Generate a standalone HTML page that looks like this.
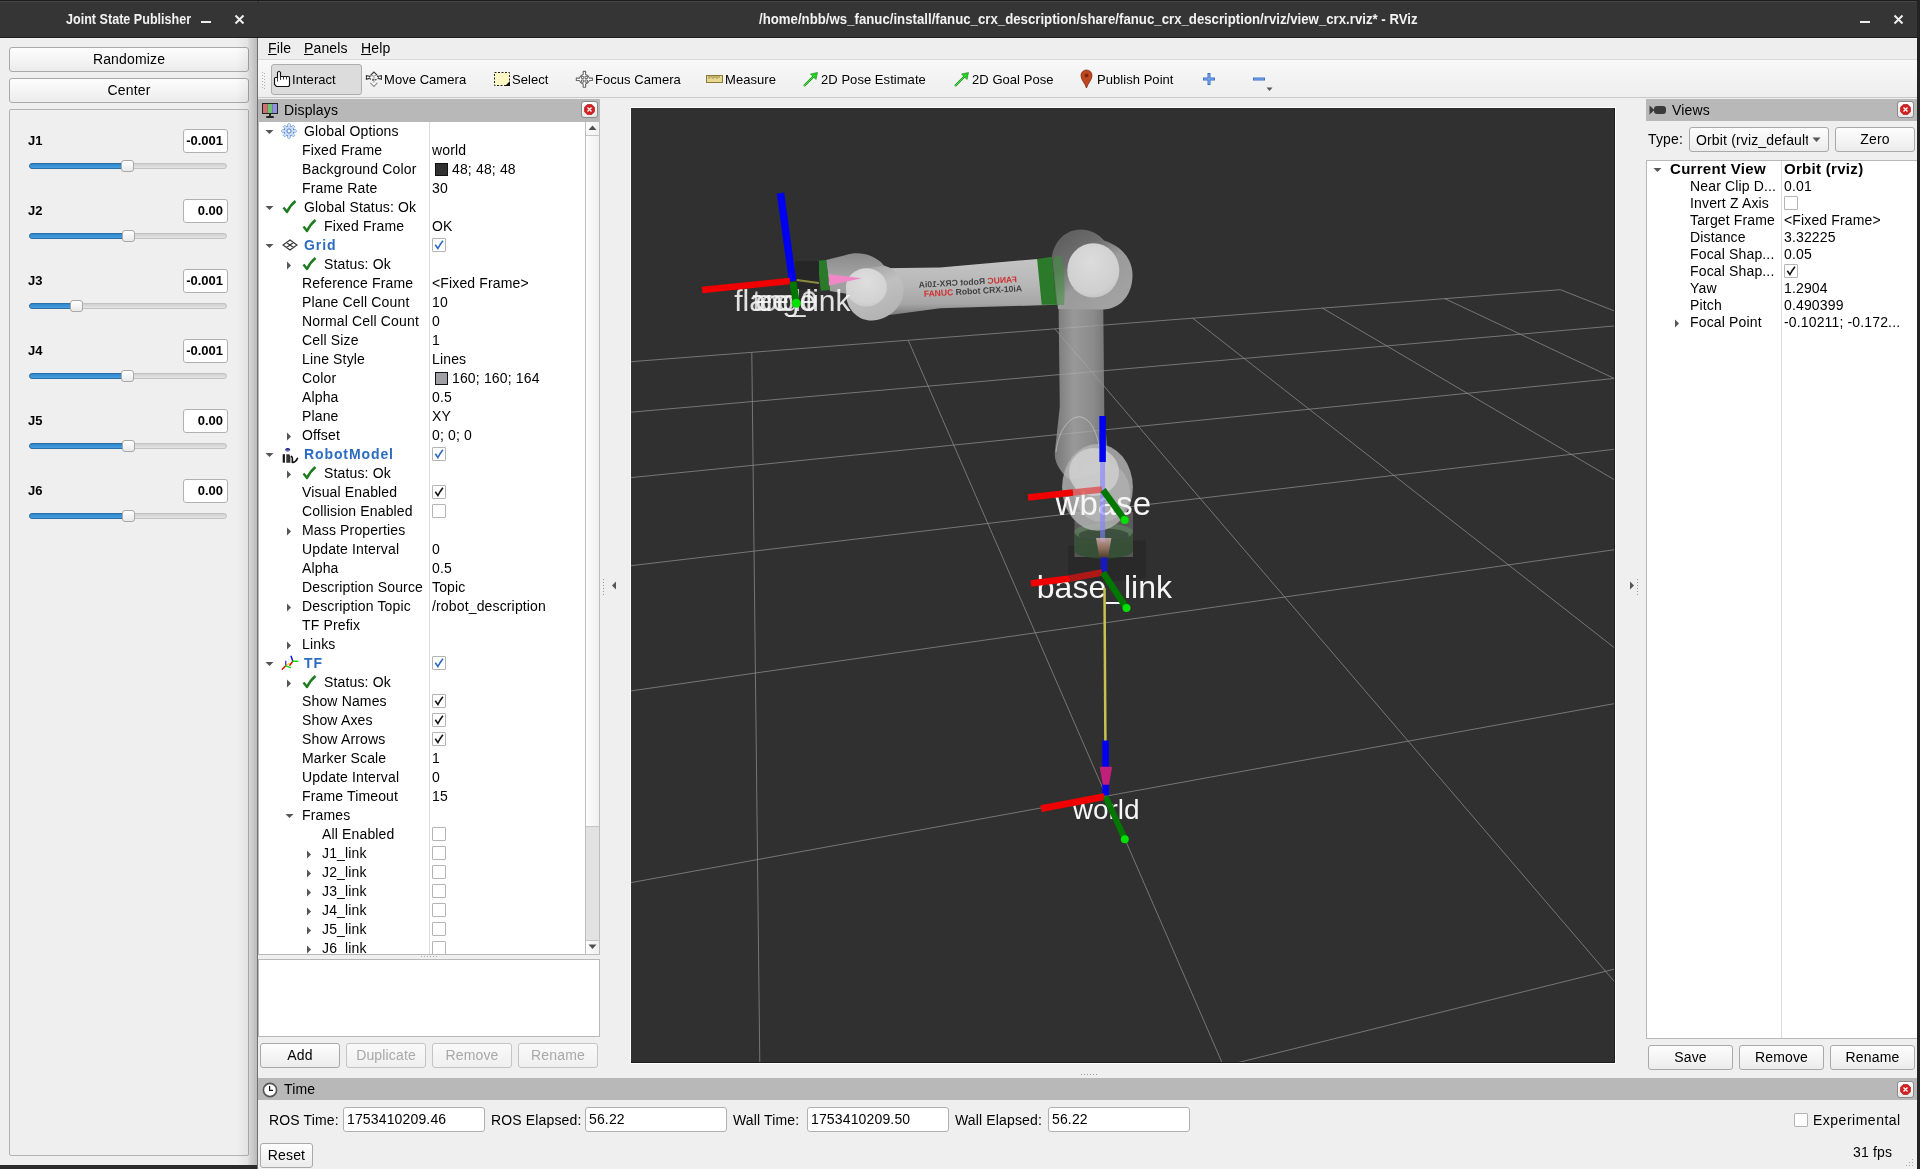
<!DOCTYPE html><html><head><meta charset="utf-8"><title>RViz</title><style>
*{box-sizing:border-box;margin:0;padding:0}
html,body{width:1920px;height:1169px;overflow:hidden;background:#222}
body{position:relative;font-family:"Liberation Sans",sans-serif;color:#000}
div{position:absolute}
.t{font-size:14px;line-height:18px;height:18px;margin-top:-9px;white-space:nowrap;letter-spacing:0.15px}
.ts{font-size:13px;line-height:16px;height:16px;margin-top:-8px;white-space:nowrap}
.btn{border:1px solid #a9a9a9;border-radius:3px;background:linear-gradient(#fdfdfd,#ececec);}
.btnd{border:1px solid #c4c4c4;border-radius:3px;background:linear-gradient(#fafafa,#efefef);}
.bl{font-size:14px;line-height:18px;text-align:center;white-space:nowrap;letter-spacing:0.15px}
.edit{background:#fff;border:1px solid #b1b1b1;border-radius:3px}
.cb{width:14px;height:14px;border:1px solid #b4b4b4;background:#fff;border-radius:1px}
.hdr{background:#b8b8b8}
.close{width:17px;height:17px;border:1px solid #8a8a8a;border-radius:3px;background:linear-gradient(#fff,#e8e8e8)}
</style></head><body>
<div style="left:0;top:0;width:1920px;height:1169px;overflow:hidden;will-change:transform">
<div style="left:0px;top:0px;width:258px;height:38px;background:#353535;border-top:1px solid #1c1c1c;border-bottom:1px solid #1e1e1e"></div>
<div style="left:0px;top:1px;width:257px;height:1px;background:#474747"></div>
<div class="t" style="left:66px;top:19px;color:#f2f2f2;font-weight:bold;font-size:15.5px;letter-spacing:0;transform:scaleX(0.812);transform-origin:0 50%">Joint State Publisher</div>
<div style="left:201px;top:21px;width:10px;height:2px;background:#eee"></div>
<svg style="position:absolute;left:234px;top:14px" width="11" height="11"><path d="M1.5 1.5L9.5 9.5M9.5 1.5L1.5 9.5" stroke="#eee" stroke-width="2"/></svg>
<div style="left:0px;top:38px;width:258px;height:1127px;background:#efefef"></div>
<div style="left:257px;top:38px;width:1px;height:1131px;background:#6f6f6f"></div>
<div style="left:0px;top:1165px;width:257px;height:4px;background:#2b2b2b"></div>
<div class="btn" style="left:9px;top:47px;width:240px;height:25px;"><div class="bl" style="left:0;top:2px;width:238px">Randomize</div></div>
<div class="btn" style="left:9px;top:78px;width:240px;height:25px;"><div class="bl" style="left:0;top:2px;width:238px">Center</div></div>
<div style="left:9px;top:109px;width:240px;height:1047px;border:1px solid #b3b3b3;border-radius:2px"></div>
<div class="t" style="left:28px;top:141px;font-weight:bold;font-size:13px;letter-spacing:0">J1</div>
<div class="edit" style="left:183px;top:129px;width:45px;height:24px;"><div class="t" style="right:4px;top:11px;font-weight:bold;font-size:13px;letter-spacing:0">-0.001</div></div>
<div style="left:29px;top:163px;width:198px;height:6px;background:linear-gradient(#d0d0d0,#e4e4e4);border:1px solid #c2c2c2;border-radius:3px"></div>
<div style="left:29px;top:163px;width:98px;height:6px;background:linear-gradient(#2f85c8,#48a0e0);border:1px solid #2a6fa8;border-radius:3px"></div>
<div style="left:121px;top:160px;width:13px;height:12px;background:linear-gradient(#ffffff,#e9e9e9);border:1px solid #a8a8a8;border-radius:3px"></div>
<div class="t" style="left:28px;top:211px;font-weight:bold;font-size:13px;letter-spacing:0">J2</div>
<div class="edit" style="left:183px;top:199px;width:45px;height:24px;"><div class="t" style="right:4px;top:11px;font-weight:bold;font-size:13px;letter-spacing:0">0.00</div></div>
<div style="left:29px;top:233px;width:198px;height:6px;background:linear-gradient(#d0d0d0,#e4e4e4);border:1px solid #c2c2c2;border-radius:3px"></div>
<div style="left:29px;top:233px;width:99px;height:6px;background:linear-gradient(#2f85c8,#48a0e0);border:1px solid #2a6fa8;border-radius:3px"></div>
<div style="left:122px;top:230px;width:13px;height:12px;background:linear-gradient(#ffffff,#e9e9e9);border:1px solid #a8a8a8;border-radius:3px"></div>
<div class="t" style="left:28px;top:281px;font-weight:bold;font-size:13px;letter-spacing:0">J3</div>
<div class="edit" style="left:183px;top:269px;width:45px;height:24px;"><div class="t" style="right:4px;top:11px;font-weight:bold;font-size:13px;letter-spacing:0">-0.001</div></div>
<div style="left:29px;top:303px;width:198px;height:6px;background:linear-gradient(#d0d0d0,#e4e4e4);border:1px solid #c2c2c2;border-radius:3px"></div>
<div style="left:29px;top:303px;width:47px;height:6px;background:linear-gradient(#2f85c8,#48a0e0);border:1px solid #2a6fa8;border-radius:3px"></div>
<div style="left:70px;top:300px;width:13px;height:12px;background:linear-gradient(#ffffff,#e9e9e9);border:1px solid #a8a8a8;border-radius:3px"></div>
<div class="t" style="left:28px;top:351px;font-weight:bold;font-size:13px;letter-spacing:0">J4</div>
<div class="edit" style="left:183px;top:339px;width:45px;height:24px;"><div class="t" style="right:4px;top:11px;font-weight:bold;font-size:13px;letter-spacing:0">-0.001</div></div>
<div style="left:29px;top:373px;width:198px;height:6px;background:linear-gradient(#d0d0d0,#e4e4e4);border:1px solid #c2c2c2;border-radius:3px"></div>
<div style="left:29px;top:373px;width:98px;height:6px;background:linear-gradient(#2f85c8,#48a0e0);border:1px solid #2a6fa8;border-radius:3px"></div>
<div style="left:121px;top:370px;width:13px;height:12px;background:linear-gradient(#ffffff,#e9e9e9);border:1px solid #a8a8a8;border-radius:3px"></div>
<div class="t" style="left:28px;top:421px;font-weight:bold;font-size:13px;letter-spacing:0">J5</div>
<div class="edit" style="left:183px;top:409px;width:45px;height:24px;"><div class="t" style="right:4px;top:11px;font-weight:bold;font-size:13px;letter-spacing:0">0.00</div></div>
<div style="left:29px;top:443px;width:198px;height:6px;background:linear-gradient(#d0d0d0,#e4e4e4);border:1px solid #c2c2c2;border-radius:3px"></div>
<div style="left:29px;top:443px;width:99px;height:6px;background:linear-gradient(#2f85c8,#48a0e0);border:1px solid #2a6fa8;border-radius:3px"></div>
<div style="left:122px;top:440px;width:13px;height:12px;background:linear-gradient(#ffffff,#e9e9e9);border:1px solid #a8a8a8;border-radius:3px"></div>
<div class="t" style="left:28px;top:491px;font-weight:bold;font-size:13px;letter-spacing:0">J6</div>
<div class="edit" style="left:183px;top:479px;width:45px;height:24px;"><div class="t" style="right:4px;top:11px;font-weight:bold;font-size:13px;letter-spacing:0">0.00</div></div>
<div style="left:29px;top:513px;width:198px;height:6px;background:linear-gradient(#d0d0d0,#e4e4e4);border:1px solid #c2c2c2;border-radius:3px"></div>
<div style="left:29px;top:513px;width:99px;height:6px;background:linear-gradient(#2f85c8,#48a0e0);border:1px solid #2a6fa8;border-radius:3px"></div>
<div style="left:122px;top:510px;width:13px;height:12px;background:linear-gradient(#ffffff,#e9e9e9);border:1px solid #a8a8a8;border-radius:3px"></div>
<div style="left:236px;top:38px;width:21px;height:1127px;background:linear-gradient(90deg,rgba(0,0,0,0),rgba(0,0,0,0.05) 55%,rgba(0,0,0,0.1) 62%,rgba(0,0,0,0.22))"></div>
<div style="left:258px;top:0px;width:1659px;height:38px;background:#353535;border-top:1px solid #1c1c1c;border-bottom:1px solid #1e1e1e"></div>
<div style="left:259px;top:1px;width:1657px;height:1px;background:#474747"></div>
<div style="left:1917px;top:0px;width:3px;height:1169px;background:#232323"></div>
<div class="t" style="left:759px;top:19px;color:#f2f2f2;font-weight:bold;font-size:15.5px;letter-spacing:0;transform:scaleX(0.853);transform-origin:0 50%">/home/nbb/ws_fanuc/install/fanuc_crx_description/share/fanuc_crx_description/rviz/view_crx.rviz* - RViz</div>
<div style="left:1860px;top:21px;width:10px;height:2px;background:#eee"></div>
<svg style="position:absolute;left:1893px;top:14px" width="11" height="11"><path d="M1.5 1.5L9.5 9.5M9.5 1.5L1.5 9.5" stroke="#eee" stroke-width="2"/></svg>
<div style="left:258px;top:38px;width:1659px;height:1131px;background:#efefef"></div>
<div style="left:258px;top:38px;width:1659px;height:22px;background:#eeeeee;border-bottom:1px solid #dadada"></div>
<div class="t" style="left:268px;top:48px;font-size:14px"><u>F</u>ile</div>
<div class="t" style="left:304px;top:48px;font-size:14px"><u>P</u>anels</div>
<div class="t" style="left:361px;top:48px;font-size:14px"><u>H</u>elp</div>
<div style="left:258px;top:60px;width:1659px;height:38px;background:linear-gradient(#f8f8f8,#eeeeee);border-bottom:1px solid #c9c9c9"></div>
<div style="left:262px;top:72px;width:1px;height:1px;background:#b0b0b0"></div>
<div style="left:264px;top:73px;width:1px;height:1px;background:#b0b0b0"></div>
<div style="left:262px;top:75px;width:1px;height:1px;background:#b0b0b0"></div>
<div style="left:264px;top:76px;width:1px;height:1px;background:#b0b0b0"></div>
<div style="left:262px;top:78px;width:1px;height:1px;background:#b0b0b0"></div>
<div style="left:264px;top:79px;width:1px;height:1px;background:#b0b0b0"></div>
<div style="left:262px;top:81px;width:1px;height:1px;background:#b0b0b0"></div>
<div style="left:264px;top:82px;width:1px;height:1px;background:#b0b0b0"></div>
<div style="left:262px;top:84px;width:1px;height:1px;background:#b0b0b0"></div>
<div style="left:264px;top:85px;width:1px;height:1px;background:#b0b0b0"></div>
<div style="left:262px;top:87px;width:1px;height:1px;background:#b0b0b0"></div>
<div style="left:264px;top:88px;width:1px;height:1px;background:#b0b0b0"></div>
<div style="left:271px;top:64px;width:91px;height:31px;background:#dcdcdc;border:1px solid #adadad;border-radius:3px"></div>
<div class="t" style="left:292px;top:80px;font-size:13px;letter-spacing:0.05px">Interact</div>
<div class="t" style="left:384px;top:80px;font-size:13px;letter-spacing:0.05px">Move Camera</div>
<div class="t" style="left:512px;top:80px;font-size:13px;letter-spacing:0.05px">Select</div>
<div class="t" style="left:595px;top:80px;font-size:13px;letter-spacing:0.05px">Focus Camera</div>
<div class="t" style="left:725px;top:80px;font-size:13px;letter-spacing:0.05px">Measure</div>
<div class="t" style="left:821px;top:80px;font-size:13px;letter-spacing:0.05px">2D Pose Estimate</div>
<div class="t" style="left:972px;top:80px;font-size:13px;letter-spacing:0.05px">2D Goal Pose</div>
<div class="t" style="left:1097px;top:80px;font-size:13px;letter-spacing:0.05px">Publish Point</div>
<svg style="position:absolute;left:268px;top:62px" width="32" height="34" viewBox="0 0 32 34">
<path d="M9.5 15.5V10.5Q11 8 12.5 10.5V14.5H20.5Q21.5 14.5 21.5 15.5V23.5L20.5 24.5H8.5L6.5 22.5V16.5Q6.5 15.5 7.5 15.5Z" fill="#fff" stroke="#111" stroke-width="1.15"/>
<path d="M9.5 15.5V19.5M12.5 14.5V18M15.5 14.5V17.5M18.5 14.5V17.5" stroke="#222" stroke-width="0.9"/></svg>
<svg style="position:absolute;left:362px;top:66px" width="24" height="26" viewBox="0 0 24 26">
<path d="M8.4 16.9L11.9 20.4L15.4 16.9" fill="#fff" stroke="#8a8a8a" stroke-width="1.1"/>
<rect x="11.1" y="9.4" width="1.6" height="7.5" fill="#bdbdbd"/>
<path d="M7.6 10.2L4.4 9.6V13.3L7.4 12.4M16.2 10.2L19.4 9.6V13.3L16.4 12.4" fill="#fff" stroke="#333" stroke-width="1.1"/>
<ellipse cx="11.9" cy="11.6" rx="4.6" ry="2.3" fill="none" stroke="#222" stroke-width="1.1" stroke-dasharray="1.6 1.2"/>
<path d="M8.5 9.4L11.9 6.1L15.3 9.4" fill="#fff" stroke="#333" stroke-width="1.1"/>
</svg>
<svg style="position:absolute;left:493px;top:71px" width="18" height="16" viewBox="0 0 18 16">
<rect x="1.5" y="1.5" width="15" height="13" fill="#fbf6c4" stroke="#222" stroke-width="1" stroke-dasharray="2,1.5"/>
<path d="M17 10v5h-5z" fill="#111"/></svg>
<svg style="position:absolute;left:572px;top:66px" width="24" height="26" viewBox="0 0 24 26">
<path d="M11.2 5.4h2.4v3.2l2.3 1.2 1.6 2.3h3v2.4h-3l-1.6 2.3-2.3 1.2v3.2h-2.4v-3.2l-2.3-1.2-1.6-2.3h-3v-2.4h3l1.6-2.3 2.3-1.2z" fill="#fff" stroke="#6a6a6a" stroke-width="1.1" stroke-linejoin="round"/>
<path d="M9.4 10.4h2.3v2.2h-2.3zM13.1 10.4h2.3v2.2h-2.3zM9.4 14h2.3v2.2h-2.3zM13.1 14h2.3v2.2h-2.3z" fill="none" stroke="#6a6a6a" stroke-width="1"/>
</svg>
<svg style="position:absolute;left:706px;top:75px" width="17" height="8" viewBox="0 0 17 8">
<rect x="0.5" y="0.5" width="16" height="7" fill="#e6d890" stroke="#8a7a3a" stroke-width="1"/>
<path d="M3 1v3M5 1v2M7 1v3M9 1v2M11 1v3M13 1v2" stroke="#8a7a3a" stroke-width="0.8"/></svg>
<svg style="position:absolute;left:802px;top:71px" width="17" height="17" viewBox="0 0 17 17">
<path d="M2 15L14 3" stroke="#1a8a1a" stroke-width="2.2"/><path d="M15.5 1.5l-1.5 7-5.5-5.5z" fill="#22cc22" stroke="#1a8a1a" stroke-width="0.6"/>
<path d="M2 15L13 4" stroke="#33ee33" stroke-width="1"/></svg>
<svg style="position:absolute;left:953px;top:71px" width="17" height="17" viewBox="0 0 17 17">
<path d="M2 15L14 3" stroke="#1a8a1a" stroke-width="2.2"/><path d="M15.5 1.5l-1.5 7-5.5-5.5z" fill="#22cc22" stroke="#1a8a1a" stroke-width="0.6"/>
<path d="M2 15L13 4" stroke="#33ee33" stroke-width="1"/></svg>
<svg style="position:absolute;left:1080px;top:69px" width="13" height="20" viewBox="0 0 13 20">
<path d="M6.5 19C5 14 1 11 1 6.5a5.5 5.5 0 0 1 11 0C12 11 8 14 6.5 19z" fill="#c0461e" stroke="#7a2a10" stroke-width="0.8"/>
<circle cx="6.5" cy="6.5" r="2" fill="#7a2a10"/></svg>
<svg style="position:absolute;left:1202px;top:72px" width="14" height="14" viewBox="0 0 14 14">
<path d="M7 1v12M1 7h12" stroke="#3a70c8" stroke-width="3"/><path d="M7 2v10M2 7h10" stroke="#8ab4f0" stroke-width="1"/></svg>
<svg style="position:absolute;left:1252px;top:75px" width="14" height="8" viewBox="0 0 14 8">
<path d="M1 4h12" stroke="#3a70c8" stroke-width="3"/><path d="M2 4h10" stroke="#8ab4f0" stroke-width="1"/></svg>
<svg style="position:absolute;left:1266px;top:87px" width="8" height="5"><path d="M0.5 0.5h6l-3 3.5z" fill="#555"/></svg>
<div class="hdr" style="left:258px;top:99px;width:342px;height:23px;"></div>
<svg style="position:absolute;left:261px;top:102px" width="18" height="17" viewBox="0 0 18 17">
<rect x="1" y="1" width="16" height="11" fill="#222"/><rect x="2" y="2" width="4.7" height="9" fill="#d07070"/><rect x="6.7" y="2" width="4.6" height="9" fill="#70c070"/><rect x="11.3" y="2" width="4.7" height="9" fill="#9090e0"/>
<rect x="8" y="12" width="2" height="2" fill="#222"/><rect x="5" y="14" width="8" height="2" rx="1" fill="#222"/></svg>
<div class="t" style="left:284px;top:110px;font-size:14px">Displays</div>
<div class="close" style="left:581px;top:101px;width:17px;height:17px;"></div><svg style="position:absolute;left:584px;top:104px" width="11" height="11" viewBox="0 0 11 11"><path d="M3.3 0.5h4.4l2.8 2.8v4.4l-2.8 2.8h-4.4l-2.8-2.8v-4.4z" fill="#d42020" stroke="#a01010" stroke-width="0.6"/><path d="M3.5 3.5l4 4M7.5 3.5l-4 4" stroke="#fff" stroke-width="1.3"/></svg>
<div style="left:258px;top:122px;width:342px;height:833px;background:#fff;border-left:1px solid #b8b8b8;border-bottom:1px solid #b8b8b8"></div>
<div style="left:429px;top:122px;width:1px;height:832px;background:#dcdcdc"></div>
<div style="left:585px;top:122px;width:15px;height:833px;background:#e2e2e2;border-left:1px solid #bdbdbd;border-right:1px solid #bdbdbd;border-bottom:1px solid #bdbdbd"></div>
<div style="left:586px;top:135px;width:13px;height:692px;background:linear-gradient(90deg,#fdfdfd,#f0f0f0);border-top:1px solid #c4c4c4;border-bottom:1px solid #c4c4c4"></div>
<div style="left:586px;top:122px;width:13px;height:13px;background:linear-gradient(90deg,#fdfdfd,#f0f0f0)"></div>
<div style="left:586px;top:940px;width:13px;height:14px;background:linear-gradient(90deg,#fdfdfd,#f0f0f0);border-top:1px solid #c4c4c4"></div>
<svg style="position:absolute;left:588px;top:125px" width="9" height="6"><path d="M0.5 5h8l-4-4.5z" fill="#505050"/></svg>
<svg style="position:absolute;left:588px;top:944px" width="9" height="6"><path d="M0.5 0.5h8l-4 4.5z" fill="#505050"/></svg>
<div style="left:259px;top:121px;width:326px;height:833px;overflow:hidden">
<div style="left:-259px;top:-121px;width:1px;height:1px"><svg style="position:absolute;left:265px;top:129px" width="9" height="6"><path d="M0.5 1h8l-4 4z" fill="#555"/></svg><svg style="position:absolute;left:281px;top:123px" width="16" height="16" viewBox="0 0 16 16"><g fill="#cfdef5" stroke="#3f7bd0" stroke-width="0.9"><rect x="6.9" y="0.9" width="2.2" height="3" rx="0.5" transform="rotate(0 8 8)"/><rect x="6.9" y="0.9" width="2.2" height="3" rx="0.5" transform="rotate(45 8 8)"/><rect x="6.9" y="0.9" width="2.2" height="3" rx="0.5" transform="rotate(90 8 8)"/><rect x="6.9" y="0.9" width="2.2" height="3" rx="0.5" transform="rotate(135 8 8)"/><rect x="6.9" y="0.9" width="2.2" height="3" rx="0.5" transform="rotate(180 8 8)"/><rect x="6.9" y="0.9" width="2.2" height="3" rx="0.5" transform="rotate(225 8 8)"/><rect x="6.9" y="0.9" width="2.2" height="3" rx="0.5" transform="rotate(270 8 8)"/><rect x="6.9" y="0.9" width="2.2" height="3" rx="0.5" transform="rotate(315 8 8)"/></g>
<circle cx="8" cy="8" r="4.9" fill="#cfdef5" stroke="#3f7bd0" stroke-width="1"/><g fill="#cfdef5"><rect x="6.9" y="0.9" width="2.2" height="3" rx="0.3" transform="rotate(0 8 8)"/><rect x="6.9" y="0.9" width="2.2" height="3" rx="0.3" transform="rotate(45 8 8)"/><rect x="6.9" y="0.9" width="2.2" height="3" rx="0.3" transform="rotate(90 8 8)"/><rect x="6.9" y="0.9" width="2.2" height="3" rx="0.3" transform="rotate(135 8 8)"/><rect x="6.9" y="0.9" width="2.2" height="3" rx="0.3" transform="rotate(180 8 8)"/><rect x="6.9" y="0.9" width="2.2" height="3" rx="0.3" transform="rotate(225 8 8)"/><rect x="6.9" y="0.9" width="2.2" height="3" rx="0.3" transform="rotate(270 8 8)"/><rect x="6.9" y="0.9" width="2.2" height="3" rx="0.3" transform="rotate(315 8 8)"/></g><circle cx="8" cy="8" r="4.4" fill="#cfdef5"/><circle cx="8" cy="8" r="2.1" fill="#fff" stroke="#3f7bd0" stroke-width="1"/></svg><div class="t" style="left:304px;top:131px;">Global Options</div><div class="t" style="left:302px;top:150px;">Fixed Frame</div><div class="t" style="left:432px;top:150px;">world</div><div class="t" style="left:302px;top:169px;">Background Color</div><div style="left:435px;top:163px;width:13px;height:13px;background:#303030;border:1px solid #111"></div><div class="t" style="left:452px;top:169px;">48; 48; 48</div><div class="t" style="left:302px;top:188px;">Frame Rate</div><div class="t" style="left:432px;top:188px;">30</div><svg style="position:absolute;left:265px;top:205px" width="9" height="6"><path d="M0.5 1h8l-4 4z" fill="#555"/></svg><svg style="position:absolute;left:282px;top:200px" width="15" height="14" viewBox="0 0 15 14"><path d="M1.5 7.5l3.5 4.5c2-4.5 5-8 8.5-11" fill="none" stroke="#1e7a1e" stroke-width="2.4" stroke-linejoin="round"/></svg><div class="t" style="left:304px;top:207px;">Global Status: Ok</div><svg style="position:absolute;left:302px;top:219px" width="15" height="14" viewBox="0 0 15 14"><path d="M1.5 7.5l3.5 4.5c2-4.5 5-8 8.5-11" fill="none" stroke="#1e7a1e" stroke-width="2.4" stroke-linejoin="round"/></svg><div class="t" style="left:324px;top:226px;">Fixed Frame</div><div class="t" style="left:432px;top:226px;">OK</div><svg style="position:absolute;left:265px;top:243px" width="9" height="6"><path d="M0.5 1h8l-4 4z" fill="#555"/></svg><svg style="position:absolute;left:282px;top:239px" width="16" height="12" viewBox="0 0 16 12"><path d="M8 1L15 6L8 11L1 6z M4.5 3.5L11.5 8.5 M11.5 3.5L4.5 8.5" fill="none" stroke="#333" stroke-width="1.1"/></svg><div class="t" style="left:304px;top:245px;color:#2c6cc0;font-weight:bold;letter-spacing:0.9px">Grid</div><div class="cb" style="left:432px;top:238px;width:14px;height:14px;"></div><svg style="position:absolute;left:434px;top:240px" width="10" height="10" viewBox="0 0 10 10"><path d="M1.3 4.8l2.6 3.7c1.5-3 3.3-5.5 5-7.7" fill="none" stroke="#2a68c0" stroke-width="1.6"/></svg><svg style="position:absolute;left:286px;top:261px" width="6" height="9"><path d="M1 0.5v8l4-4z" fill="#555"/></svg><svg style="position:absolute;left:302px;top:257px" width="15" height="14" viewBox="0 0 15 14"><path d="M1.5 7.5l3.5 4.5c2-4.5 5-8 8.5-11" fill="none" stroke="#1e7a1e" stroke-width="2.4" stroke-linejoin="round"/></svg><div class="t" style="left:324px;top:264px;">Status: Ok</div><div class="t" style="left:302px;top:283px;">Reference Frame</div><div class="t" style="left:432px;top:283px;">&lt;Fixed Frame&gt;</div><div class="t" style="left:302px;top:302px;">Plane Cell Count</div><div class="t" style="left:432px;top:302px;">10</div><div class="t" style="left:302px;top:321px;">Normal Cell Count</div><div class="t" style="left:432px;top:321px;">0</div><div class="t" style="left:302px;top:340px;">Cell Size</div><div class="t" style="left:432px;top:340px;">1</div><div class="t" style="left:302px;top:359px;">Line Style</div><div class="t" style="left:432px;top:359px;">Lines</div><div class="t" style="left:302px;top:378px;">Color</div><div style="left:435px;top:372px;width:13px;height:13px;background:#a0a0a4;border:1px solid #111"></div><div class="t" style="left:452px;top:378px;">160; 160; 164</div><div class="t" style="left:302px;top:397px;">Alpha</div><div class="t" style="left:432px;top:397px;">0.5</div><div class="t" style="left:302px;top:416px;">Plane</div><div class="t" style="left:432px;top:416px;">XY</div><svg style="position:absolute;left:286px;top:432px" width="6" height="9"><path d="M1 0.5v8l4-4z" fill="#555"/></svg><div class="t" style="left:302px;top:435px;">Offset</div><div class="t" style="left:432px;top:435px;">0; 0; 0</div><svg style="position:absolute;left:265px;top:452px" width="9" height="6"><path d="M0.5 1h8l-4 4z" fill="#555"/></svg><svg style="position:absolute;left:278px;top:443px" width="24" height="24" viewBox="0 0 24 24">
<ellipse cx="9.7" cy="6.8" rx="2.5" ry="1.7" fill="#1010a0"/><path d="M7.4 7.2h4.6" stroke="#d8d0a0" stroke-width="0.7"/>
<rect x="4.7" y="11.2" width="2.2" height="8.5" fill="#111"/><path d="M8.2 11.2h3.2l1 2.5v6h-4.2z" fill="#333"/><path d="M8.6 12v7.5" stroke="#777" stroke-width="0.8"/>
<path d="M13.4 13.4c1.6 1 1 4 0.9 5.8c1.5 0.5 3.5-0.5 5.2-3.8" fill="none" stroke="#111" stroke-width="1.6" stroke-linecap="round"/></svg><div class="t" style="left:304px;top:454px;color:#2c6cc0;font-weight:bold;letter-spacing:0.9px">RobotModel</div><div class="cb" style="left:432px;top:447px;width:14px;height:14px;"></div><svg style="position:absolute;left:434px;top:449px" width="10" height="10" viewBox="0 0 10 10"><path d="M1.3 4.8l2.6 3.7c1.5-3 3.3-5.5 5-7.7" fill="none" stroke="#2a68c0" stroke-width="1.6"/></svg><svg style="position:absolute;left:286px;top:470px" width="6" height="9"><path d="M1 0.5v8l4-4z" fill="#555"/></svg><svg style="position:absolute;left:302px;top:466px" width="15" height="14" viewBox="0 0 15 14"><path d="M1.5 7.5l3.5 4.5c2-4.5 5-8 8.5-11" fill="none" stroke="#1e7a1e" stroke-width="2.4" stroke-linejoin="round"/></svg><div class="t" style="left:324px;top:473px;">Status: Ok</div><div class="t" style="left:302px;top:492px;">Visual Enabled</div><div class="cb" style="left:432px;top:485px;width:14px;height:14px;"></div><svg style="position:absolute;left:434px;top:487px" width="10" height="10" viewBox="0 0 10 10"><path d="M1.3 4.8l2.6 3.7c1.5-3 3.3-5.5 5-7.7" fill="none" stroke="#111" stroke-width="1.6"/></svg><div class="t" style="left:302px;top:511px;">Collision Enabled</div><div class="cb" style="left:432px;top:504px;width:14px;height:14px;"></div><svg style="position:absolute;left:286px;top:527px" width="6" height="9"><path d="M1 0.5v8l4-4z" fill="#555"/></svg><div class="t" style="left:302px;top:530px;">Mass Properties</div><div class="t" style="left:302px;top:549px;">Update Interval</div><div class="t" style="left:432px;top:549px;">0</div><div class="t" style="left:302px;top:568px;">Alpha</div><div class="t" style="left:432px;top:568px;">0.5</div><div class="t" style="left:302px;top:587px;">Description Source</div><div class="t" style="left:432px;top:587px;">Topic</div><svg style="position:absolute;left:286px;top:603px" width="6" height="9"><path d="M1 0.5v8l4-4z" fill="#555"/></svg><div class="t" style="left:302px;top:606px;">Description Topic</div><div class="t" style="left:432px;top:606px;">/robot_description</div><div class="t" style="left:302px;top:625px;">TF Prefix</div><svg style="position:absolute;left:286px;top:641px" width="6" height="9"><path d="M1 0.5v8l4-4z" fill="#555"/></svg><div class="t" style="left:302px;top:644px;">Links</div><svg style="position:absolute;left:265px;top:661px" width="9" height="6"><path d="M0.5 1h8l-4 4z" fill="#555"/></svg><svg style="position:absolute;left:278px;top:651px" width="24" height="24" viewBox="0 0 24 24" stroke-linecap="round">
<path d="M7.7 14.8L11 12.3" stroke="#f0e000" stroke-width="1.3"/>
<path d="M7.7 14.8V10.3" stroke="#4040ff" stroke-width="1.4"/><path d="M7.7 14.8L4.3 18.3" stroke="#f00000" stroke-width="1.4"/><path d="M7.7 14.8L12.5 16.6" stroke="#00e000" stroke-width="1.4"/>
<path d="M14.8 10.3L13.1 5.3" stroke="#0000f0" stroke-width="1.4"/><path d="M14.8 10.3L11.8 14.2" stroke="#f00000" stroke-width="1.4"/><path d="M14.8 10.3H19.7" stroke="#00e000" stroke-width="1.4"/></svg><div class="t" style="left:304px;top:663px;color:#2c6cc0;font-weight:bold;letter-spacing:0.9px">TF</div><div class="cb" style="left:432px;top:656px;width:14px;height:14px;"></div><svg style="position:absolute;left:434px;top:658px" width="10" height="10" viewBox="0 0 10 10"><path d="M1.3 4.8l2.6 3.7c1.5-3 3.3-5.5 5-7.7" fill="none" stroke="#2a68c0" stroke-width="1.6"/></svg><svg style="position:absolute;left:286px;top:679px" width="6" height="9"><path d="M1 0.5v8l4-4z" fill="#555"/></svg><svg style="position:absolute;left:302px;top:675px" width="15" height="14" viewBox="0 0 15 14"><path d="M1.5 7.5l3.5 4.5c2-4.5 5-8 8.5-11" fill="none" stroke="#1e7a1e" stroke-width="2.4" stroke-linejoin="round"/></svg><div class="t" style="left:324px;top:682px;">Status: Ok</div><div class="t" style="left:302px;top:701px;">Show Names</div><div class="cb" style="left:432px;top:694px;width:14px;height:14px;"></div><svg style="position:absolute;left:434px;top:696px" width="10" height="10" viewBox="0 0 10 10"><path d="M1.3 4.8l2.6 3.7c1.5-3 3.3-5.5 5-7.7" fill="none" stroke="#111" stroke-width="1.6"/></svg><div class="t" style="left:302px;top:720px;">Show Axes</div><div class="cb" style="left:432px;top:713px;width:14px;height:14px;"></div><svg style="position:absolute;left:434px;top:715px" width="10" height="10" viewBox="0 0 10 10"><path d="M1.3 4.8l2.6 3.7c1.5-3 3.3-5.5 5-7.7" fill="none" stroke="#111" stroke-width="1.6"/></svg><div class="t" style="left:302px;top:739px;">Show Arrows</div><div class="cb" style="left:432px;top:732px;width:14px;height:14px;"></div><svg style="position:absolute;left:434px;top:734px" width="10" height="10" viewBox="0 0 10 10"><path d="M1.3 4.8l2.6 3.7c1.5-3 3.3-5.5 5-7.7" fill="none" stroke="#111" stroke-width="1.6"/></svg><div class="t" style="left:302px;top:758px;">Marker Scale</div><div class="t" style="left:432px;top:758px;">1</div><div class="t" style="left:302px;top:777px;">Update Interval</div><div class="t" style="left:432px;top:777px;">0</div><div class="t" style="left:302px;top:796px;">Frame Timeout</div><div class="t" style="left:432px;top:796px;">15</div><svg style="position:absolute;left:285px;top:813px" width="9" height="6"><path d="M0.5 1h8l-4 4z" fill="#555"/></svg><div class="t" style="left:302px;top:815px;">Frames</div><div class="t" style="left:322px;top:834px;">All Enabled</div><div class="cb" style="left:432px;top:827px;width:14px;height:14px;"></div><svg style="position:absolute;left:306px;top:850px" width="6" height="9"><path d="M1 0.5v8l4-4z" fill="#555"/></svg><div class="t" style="left:322px;top:853px;">J1_link</div><div class="cb" style="left:432px;top:846px;width:14px;height:14px;"></div><svg style="position:absolute;left:306px;top:869px" width="6" height="9"><path d="M1 0.5v8l4-4z" fill="#555"/></svg><div class="t" style="left:322px;top:872px;">J2_link</div><div class="cb" style="left:432px;top:865px;width:14px;height:14px;"></div><svg style="position:absolute;left:306px;top:888px" width="6" height="9"><path d="M1 0.5v8l4-4z" fill="#555"/></svg><div class="t" style="left:322px;top:891px;">J3_link</div><div class="cb" style="left:432px;top:884px;width:14px;height:14px;"></div><svg style="position:absolute;left:306px;top:907px" width="6" height="9"><path d="M1 0.5v8l4-4z" fill="#555"/></svg><div class="t" style="left:322px;top:910px;">J4_link</div><div class="cb" style="left:432px;top:903px;width:14px;height:14px;"></div><svg style="position:absolute;left:306px;top:926px" width="6" height="9"><path d="M1 0.5v8l4-4z" fill="#555"/></svg><div class="t" style="left:322px;top:929px;">J5_link</div><div class="cb" style="left:432px;top:922px;width:14px;height:14px;"></div><svg style="position:absolute;left:306px;top:945px" width="6" height="9"><path d="M1 0.5v8l4-4z" fill="#555"/></svg><div class="t" style="left:322px;top:948px;">J6_link</div><div class="cb" style="left:432px;top:941px;width:14px;height:14px;"></div></div></div>
<div style="left:258px;top:959px;width:342px;height:78px;background:#fff;border:1px solid #b8b8b8"></div>
<div style="left:421px;top:956px;width:1px;height:1px;background:#a8a8a8"></div>
<div style="left:424px;top:956px;width:1px;height:1px;background:#a8a8a8"></div>
<div style="left:427px;top:956px;width:1px;height:1px;background:#a8a8a8"></div>
<div style="left:430px;top:956px;width:1px;height:1px;background:#a8a8a8"></div>
<div style="left:433px;top:956px;width:1px;height:1px;background:#a8a8a8"></div>
<div style="left:436px;top:956px;width:1px;height:1px;background:#a8a8a8"></div>
<div class="btn" style="left:260px;top:1043px;width:80px;height:25px;"><div class="bl" style="left:0;top:2px;width:78px;color:#000">Add</div></div>
<div class="btnd" style="left:346px;top:1043px;width:80px;height:25px;"><div class="bl" style="left:0;top:2px;width:78px;color:#a8a8a8">Duplicate</div></div>
<div class="btnd" style="left:432px;top:1043px;width:80px;height:25px;"><div class="bl" style="left:0;top:2px;width:78px;color:#a8a8a8">Remove</div></div>
<div class="btnd" style="left:518px;top:1043px;width:80px;height:25px;"><div class="bl" style="left:0;top:2px;width:78px;color:#a8a8a8">Rename</div></div>
<div style="left:603px;top:579px;width:1px;height:1px;background:#999"></div>
<div style="left:1637px;top:579px;width:1px;height:1px;background:#999"></div>
<div style="left:603px;top:582px;width:1px;height:1px;background:#999"></div>
<div style="left:1637px;top:582px;width:1px;height:1px;background:#999"></div>
<div style="left:603px;top:585px;width:1px;height:1px;background:#999"></div>
<div style="left:1637px;top:585px;width:1px;height:1px;background:#999"></div>
<div style="left:603px;top:588px;width:1px;height:1px;background:#999"></div>
<div style="left:1637px;top:588px;width:1px;height:1px;background:#999"></div>
<div style="left:603px;top:591px;width:1px;height:1px;background:#999"></div>
<div style="left:1637px;top:591px;width:1px;height:1px;background:#999"></div>
<div style="left:603px;top:594px;width:1px;height:1px;background:#999"></div>
<div style="left:1637px;top:594px;width:1px;height:1px;background:#999"></div>
<svg style="position:absolute;left:611px;top:581px" width="6" height="9"><path d="M5 0.5v8l-4-4z" fill="#555"/></svg>
<svg style="position:absolute;left:1629px;top:581px" width="6" height="9"><path d="M1 0.5v8l4-4z" fill="#555"/></svg>
<div style="left:1081px;top:1074px;width:1px;height:1px;background:#999"></div>
<div style="left:1084px;top:1074px;width:1px;height:1px;background:#999"></div>
<div style="left:1087px;top:1074px;width:1px;height:1px;background:#999"></div>
<div style="left:1090px;top:1074px;width:1px;height:1px;background:#999"></div>
<div style="left:1093px;top:1074px;width:1px;height:1px;background:#999"></div>
<div style="left:1096px;top:1074px;width:1px;height:1px;background:#999"></div>
<div class="hdr" style="left:1646px;top:99px;width:271px;height:22px;"></div>
<svg style="position:absolute;left:1649px;top:104px" width="18" height="12" viewBox="0 0 18 12"><path d="M0.5 1.5l5 4.5-5 4.5z" fill="#3a3a3a"/><rect x="5" y="2" width="12" height="8" rx="3" fill="#3a3a3a"/></svg>
<div class="t" style="left:1672px;top:110px;font-size:14px">Views</div>
<div class="close" style="left:1897px;top:101px;width:17px;height:17px;"></div><svg style="position:absolute;left:1900px;top:104px" width="11" height="11" viewBox="0 0 11 11"><path d="M3.3 0.5h4.4l2.8 2.8v4.4l-2.8 2.8h-4.4l-2.8-2.8v-4.4z" fill="#d42020" stroke="#a01010" stroke-width="0.6"/><path d="M3.5 3.5l4 4M7.5 3.5l-4 4" stroke="#fff" stroke-width="1.3"/></svg>
<div class="t" style="left:1648px;top:139px;font-size:14px">Type:</div>
<div class="btn" style="left:1689px;top:127px;width:140px;height:25px;"><div style="left:0;top:0;width:118px;height:23px;overflow:hidden"><div class="t" style="left:6px;top:12px">Orbit (rviz_default_plugins)</div></div></div>
<svg style="position:absolute;left:1812px;top:137px" width="9" height="6"><path d="M0.5 0.5h8l-4 4.5z" fill="#555"/></svg>
<div class="btn" style="left:1835px;top:127px;width:80px;height:25px;"><div class="bl" style="left:0;top:2px;width:78px">Zero</div></div>
<div style="left:1646px;top:160px;width:271px;height:879px;background:#fff;border-left:1px solid #b8b8b8;border-top:1px solid #b8b8b8;border-bottom:1px solid #b8b8b8"></div>
<div style="left:1781px;top:161px;width:1px;height:877px;background:#dcdcdc"></div>
<svg style="position:absolute;left:1653px;top:167px" width="9" height="6"><path d="M0.5 1h8l-4 4z" fill="#555"/></svg>
<div class="t" style="left:1670px;top:169px;font-weight:bold;font-size:15px;letter-spacing:0.3px">Current View</div>
<div class="t" style="left:1784px;top:169px;font-weight:bold;font-size:15px;letter-spacing:0.3px">Orbit (rviz)</div>
<div class="t" style="left:1690px;top:186px;">Near Clip D...</div>
<div class="t" style="left:1784px;top:186px;">0.01</div>
<div class="t" style="left:1690px;top:203px;">Invert Z Axis</div>
<div class="cb" style="left:1784px;top:196px;width:14px;height:14px;"></div>
<div class="t" style="left:1690px;top:220px;">Target Frame</div>
<div class="t" style="left:1784px;top:220px;">&lt;Fixed Frame&gt;</div>
<div class="t" style="left:1690px;top:237px;">Distance</div>
<div class="t" style="left:1784px;top:237px;">3.32225</div>
<div class="t" style="left:1690px;top:254px;">Focal Shap...</div>
<div class="t" style="left:1784px;top:254px;">0.05</div>
<div class="t" style="left:1690px;top:271px;">Focal Shap...</div>
<div class="cb" style="left:1784px;top:264px;width:14px;height:14px;"></div><svg style="position:absolute;left:1786px;top:266px" width="10" height="10" viewBox="0 0 10 10"><path d="M1.3 4.8l2.6 3.7c1.5-3 3.3-5.5 5-7.7" fill="none" stroke="#111" stroke-width="1.6"/></svg>
<div class="t" style="left:1690px;top:288px;">Yaw</div>
<div class="t" style="left:1784px;top:288px;">1.2904</div>
<div class="t" style="left:1690px;top:305px;">Pitch</div>
<div class="t" style="left:1784px;top:305px;">0.490399</div>
<svg style="position:absolute;left:1674px;top:319px" width="6" height="9"><path d="M1 0.5v8l4-4z" fill="#555"/></svg>
<div class="t" style="left:1690px;top:322px;">Focal Point</div>
<div class="t" style="left:1784px;top:322px;">-0.10211; -0.172...</div>
<div class="btn" style="left:1648px;top:1045px;width:85px;height:25px;"><div class="bl" style="left:0;top:2px;width:83px">Save</div></div>
<div class="btn" style="left:1739px;top:1045px;width:85px;height:25px;"><div class="bl" style="left:0;top:2px;width:83px">Remove</div></div>
<div class="btn" style="left:1830px;top:1045px;width:85px;height:25px;"><div class="bl" style="left:0;top:2px;width:83px">Rename</div></div>
<div class="hdr" style="left:258px;top:1078px;width:1659px;height:22px;"></div>
<svg style="position:absolute;left:262px;top:1082px" width="16" height="16" viewBox="0 0 16 16"><circle cx="8" cy="8" r="6.6" fill="#fff" stroke="#555" stroke-width="1.6"/><path d="M7.6 4v4.4h3.4" fill="none" stroke="#111" stroke-width="1.2"/></svg>
<div class="t" style="left:284px;top:1089px;font-size:14px">Time</div>
<div class="close" style="left:1897px;top:1081px;width:17px;height:17px;"></div><svg style="position:absolute;left:1900px;top:1084px" width="11" height="11" viewBox="0 0 11 11"><path d="M3.3 0.5h4.4l2.8 2.8v4.4l-2.8 2.8h-4.4l-2.8-2.8v-4.4z" fill="#d42020" stroke="#a01010" stroke-width="0.6"/><path d="M3.5 3.5l4 4M7.5 3.5l-4 4" stroke="#fff" stroke-width="1.3"/></svg>
<div class="t" style="left:269px;top:1120px;">ROS Time:</div>
<div class="edit" style="left:343px;top:1107px;width:142px;height:25px;"></div>
<div class="t" style="left:347px;top:1119px;">1753410209.46</div>
<div class="t" style="left:491px;top:1120px;">ROS Elapsed:</div>
<div class="edit" style="left:585px;top:1107px;width:142px;height:25px;"></div>
<div class="t" style="left:589px;top:1119px;">56.22</div>
<div class="t" style="left:733px;top:1120px;">Wall Time:</div>
<div class="edit" style="left:807px;top:1107px;width:142px;height:25px;"></div>
<div class="t" style="left:811px;top:1119px;">1753410209.50</div>
<div class="t" style="left:955px;top:1120px;">Wall Elapsed:</div>
<div class="edit" style="left:1048px;top:1107px;width:142px;height:25px;"></div>
<div class="t" style="left:1052px;top:1119px;">56.22</div>
<div class="cb" style="left:1794px;top:1113px;width:14px;height:14px;"></div>
<div class="t" style="left:1813px;top:1120px;letter-spacing:0.5px">Experimental</div>
<div class="btn" style="left:260px;top:1143px;width:53px;height:25px;"><div class="bl" style="left:0;top:2px;width:51px">Reset</div></div>
<div class="t" style="left:1853px;top:1152px;">31 fps</div>
<div style="left:1912px;top:1159px;width:1px;height:1px;background:#aaa"></div>
<div style="left:1912px;top:1162px;width:1px;height:1px;background:#aaa"></div>
<div style="left:1912px;top:1165px;width:1px;height:1px;background:#aaa"></div>
<div style="left:1909px;top:1162px;width:1px;height:1px;background:#aaa"></div>
<div style="left:1909px;top:1165px;width:1px;height:1px;background:#aaa"></div>
<div style="left:1906px;top:1165px;width:1px;height:1px;background:#aaa"></div>
<div style="left:630px;top:107px;width:986px;height:957px;background:#fff"></div>
<div style="left:631px;top:108px;width:984px;height:955px;background:#303030;border-right:1px solid #1e1e1e;border-bottom:1px solid #1e1e1e"></div>
<svg style="position:absolute;left:0;top:0" width="1920" height="1169" viewBox="0 0 1920 1169"><defs><clipPath id="vc"><rect x="631" y="108" width="983" height="954"/></clipPath></defs><g clip-path="url(#vc)"><g stroke="#8e8e90" stroke-width="1" stroke-opacity="0.75"><line x1="631.0" y1="361.7" x2="1560.3" y2="289.7"/><line x1="631.0" y1="412.2" x2="1615.0" y2="325.9"/><line x1="631.0" y1="477.6" x2="1615.0" y2="378.4"/><line x1="631.0" y1="565.7" x2="1615.0" y2="449.2"/><line x1="751.8" y1="352.4" x2="759.8" y2="1063.0"/><line x1="631.0" y1="690.9" x2="1615.0" y2="549.6"/><line x1="908.2" y1="340.2" x2="1222.2" y2="1063.0"/><line x1="631.0" y1="882.6" x2="1615.0" y2="703.5"/><line x1="1054.9" y1="328.9" x2="1615.0" y2="982.3"/><line x1="1236.4" y1="1063.0" x2="1615.0" y2="969.0"/><line x1="1192.7" y1="318.2" x2="1615.0" y2="648.2"/><line x1="1322.4" y1="308.1" x2="1615.0" y2="480.1"/><line x1="1444.7" y1="298.6" x2="1615.0" y2="378.8"/><line x1="1560.3" y1="289.7" x2="1615.0" y2="311.2"/></g><defs>
<linearGradient id="gUA" x1="0" y1="0" x2="1" y2="0"><stop offset="0" stop-color="#8c8c8c"/><stop offset="0.35" stop-color="#b4b4b4"/><stop offset="0.7" stop-color="#a2a2a2"/><stop offset="1" stop-color="#7e7e7e"/></linearGradient>
<linearGradient id="gFA" x1="0" y1="0" x2="0" y2="1"><stop offset="0" stop-color="#c4c4c4"/><stop offset="0.45" stop-color="#b8b8b8"/><stop offset="0.8" stop-color="#a6a6a6"/><stop offset="1" stop-color="#7a7a7a"/></linearGradient>
<radialGradient id="gJ" cx="0.4" cy="0.4" r="0.7"><stop offset="0" stop-color="#e0e0e0"/><stop offset="0.7" stop-color="#c8c8c8"/><stop offset="1" stop-color="#a0a0a0"/></radialGradient>
<linearGradient id="gEB" x1="0.1" y1="0" x2="0.8" y2="0.9"><stop offset="0" stop-color="#5c5c5c"/><stop offset="0.35" stop-color="#6e6e6e"/><stop offset="0.6" stop-color="#9a9a9a"/><stop offset="1" stop-color="#a2a2a2"/></linearGradient>
<radialGradient id="gED" cx="0.45" cy="0.35" r="0.75"><stop offset="0" stop-color="#dcdcdc"/><stop offset="0.75" stop-color="#cfcfcf"/><stop offset="1" stop-color="#bdbdbd"/></radialGradient>
<linearGradient id="gW" x1="0" y1="0" x2="0.4" y2="1"><stop offset="0" stop-color="#9a9a9a"/><stop offset="0.5" stop-color="#c0c0c0"/><stop offset="1" stop-color="#b4b4b4"/></linearGradient>
<linearGradient id="gCone" x1="0" y1="0" x2="0" y2="1"><stop offset="0" stop-color="#d8b8b8"/><stop offset="0.45" stop-color="#b08070"/><stop offset="1" stop-color="#5a3a2a"/></linearGradient>
<linearGradient id="gCap" x1="0" y1="0" x2="0" y2="1"><stop offset="0" stop-color="#8a8a8a"/><stop offset="0.5" stop-color="#a4a4a4"/><stop offset="1" stop-color="#9a9a9a"/></linearGradient>
<radialGradient id="gWD" cx="0.5" cy="0.35" r="0.7"><stop offset="0" stop-color="#dedede"/><stop offset="0.8" stop-color="#d2d2d2"/><stop offset="1" stop-color="#c6c6c6"/></radialGradient>
</defs>
<g id="robot">
<!-- base -->
<path d="M1068 546 L1146 540 L1146 578 L1106 582 L1068 578 Z" fill="#262626" fill-opacity="0.7"/>
<rect x="1074.5" y="512" width="58.5" height="45" fill="#8e8e8e" fill-opacity="0.45"/>
<path d="M1074.5 532 L1074.5 551 A29.3 8 0 0 0 1133 551 L1133 532 Z" fill="#2f4f2f" fill-opacity="0.8"/>
<ellipse cx="1103.7" cy="532" rx="29.3" ry="8.5" fill="#5f7f5f" fill-opacity="0.75"/>
<ellipse cx="1103.7" cy="535" rx="25" ry="6.5" fill="#3a4a3a" fill-opacity="0.85"/>
<!-- upper arm -->
<path d="M1058.5 300 L1103.2 300 L1104.4 420 L1110 470 L1070 480 C1060 472 1054 462 1054.8 452 L1059.8 406.7 Z" fill="url(#gUA)" fill-opacity="0.8"/>
<path d="M1056 452 C1058 430 1072 412 1084 418 C1095 424 1098 440 1100 450" fill="none" stroke="#d8d8d8" stroke-width="0.8" stroke-opacity="0.7"/>
<ellipse cx="1097.5" cy="487.3" rx="35.4" ry="43.4" fill="#b4b4b4" fill-opacity="0.82"/>
<ellipse cx="1094" cy="472" rx="25" ry="24" fill="#d6d6d6" fill-opacity="0.75"/>
<ellipse cx="1102" cy="492" rx="28" ry="30" fill="#cfcfcf" fill-opacity="0.35"/>
<!-- forearm -->
<path d="M846 262 L882.5 268.3 L940 267.5 L1037.7 259 L1056 304.8 L940 308.3 L890 315 L846 292 Z" fill="url(#gFA)"/>
<g font-family="Liberation Sans" font-size="8.6" font-weight="bold" text-anchor="middle">
<text x="973" y="294" fill="#404040" transform="rotate(-3.2 973 294)"><tspan fill="#d03030">FANUC</tspan> Robot CRX-10iA</text>
<g transform="translate(968 285) rotate(-3.2) scale(-1 1)"><text x="0" y="0" fill="#404040"><tspan fill="#d03030">FANUC</tspan> Robot CRX-10iA</text></g>
</g>
<path d="M1037.1 259 L1052 256.7 L1056 304.8 L1041.7 304.8 Z" fill="#2a7a2a"/>
<path d="M1052 256.7 L1064 256 L1064 305 L1056 304.8 Z" fill="#4a8a4a" fill-opacity="0.6"/>
<!-- elbow joint -->
<path d="M1052 256C1055 240 1066 230 1080 229.5C1090 229.5 1099 234 1104 240.5C1122 246 1133 260 1132.5 276C1132 296 1120 309 1103 309.5L1058 309L1052 256Z" fill="url(#gEB)"/>
<path d="M1053.5 257L1061 255.5C1064 262 1065.5 285 1064 305L1056 305Z" fill="#3f8f3f" fill-opacity="0.55"/>
<ellipse cx="1093.3" cy="270.4" rx="26" ry="27.2" fill="url(#gED)"/>
<!-- wrist -->
<path d="M826 260L846 255C853 252.5 864 252.5 872 256.5C878 259.5 882 262 884 266L884 300L830 291Z" fill="url(#gCap)"/>
<path d="M846 296C848 312 860 321 872 320.5C888 319.5 902 308 903.5 293C904.5 280 897 269 884 265.5L858 270C850 276 845 286 846 296Z" fill="url(#gW)"/>
<ellipse cx="866.4" cy="287.4" rx="20.5" ry="19.2" fill="url(#gWD)"/>
<path d="M817.5 260.8 L826.3 260 L830 290 L820.8 290.8 Z" fill="#2b7a2b"/>
<rect x="795" y="261" width="24" height="29" fill="#262626"/>
<path d="M828.8 274.2 L861.7 278.3 L828.8 285.4 Z" fill="#f088c8"/>
<path d="M796.7 280 L819 283" stroke="#8a8a40" stroke-width="2"/>
</g>
<g font-family="Liberation Sans" fill="#f6f6f6" text-anchor="middle">
<text x="1106.2" y="819" font-size="28">world</text>
<text x="1104.4" y="598" font-size="32">base_link</text>
<text x="1103.3" y="515" font-size="33">wbase</text>
<text x="775" y="311" font-size="30" fill-opacity="0.9">flange</text>
<text x="803" y="311" font-size="30" fill-opacity="0.9">ee_link</text>
<text x="785" y="311" font-size="30" fill-opacity="0.8">tool0</text>
</g>
<!-- TF axes -->
<g stroke-linecap="butt">
<line x1="780.5" y1="193" x2="792.5" y2="281" stroke="#0000f0" stroke-width="7.5"/>
<line x1="702" y1="290" x2="790" y2="281" stroke="#f00000" stroke-width="6.5"/>
<line x1="793" y1="282" x2="796.3" y2="303" stroke="#007800" stroke-width="7"/><circle cx="796.3" cy="303.3" r="4.5" fill="#00e000"/>
<line x1="1102.6" y1="416" x2="1102.6" y2="462" stroke="#0000f0" stroke-width="6.5"/>
<line x1="1102.6" y1="462" x2="1102.6" y2="542" stroke="#8080ff" stroke-width="5" stroke-opacity="0.6"/>
<line x1="1028" y1="497.5" x2="1073" y2="492.5" stroke="#f00000" stroke-width="6.5"/>
<line x1="1073" y1="492.5" x2="1102" y2="489.5" stroke="#e05050" stroke-width="6.5" stroke-opacity="0.8"/>
<line x1="1103" y1="490" x2="1124.8" y2="520" stroke="#007800" stroke-width="6.5"/><circle cx="1124.7" cy="520" r="4" fill="#00e000"/>
<path d="M1096 538 L1111.4 538 L1108 557.5 L1099.5 557.5 Z" fill="url(#gCone)" fill-opacity="0.8"/>
<line x1="1104" y1="557.5" x2="1104" y2="572" stroke="#1818c0" stroke-width="6.5"/>
<line x1="1030.8" y1="583.5" x2="1070" y2="578.5" stroke="#f00000" stroke-width="6.5"/>
<line x1="1070" y1="578.5" x2="1102" y2="572.5" stroke="#b01818" stroke-width="6.5"/>
<line x1="1103" y1="572.5" x2="1126.5" y2="608" stroke="#007800" stroke-width="6.5"/><circle cx="1126.5" cy="608" r="4" fill="#00e000"/>
<line x1="1104.5" y1="588" x2="1105.4" y2="742" stroke="#c8c050" stroke-width="2.5"/>
<line x1="1105.6" y1="740.5" x2="1105.6" y2="795.4" stroke="#0000f0" stroke-width="6.6"/>
<path d="M1099.6 766.7 L1112.2 766.7 L1109 784.7 L1102.8 784.7 Z" fill="#c0207a"/>
<line x1="1041" y1="808.6" x2="1104.4" y2="796.6" stroke="#f00000" stroke-width="7"/>
<line x1="1105.6" y1="796.6" x2="1124.8" y2="839" stroke="#007800" stroke-width="6"/><circle cx="1124.8" cy="839.2" r="4" fill="#00e000"/>
</g>

</g></svg>
</div></body></html>
